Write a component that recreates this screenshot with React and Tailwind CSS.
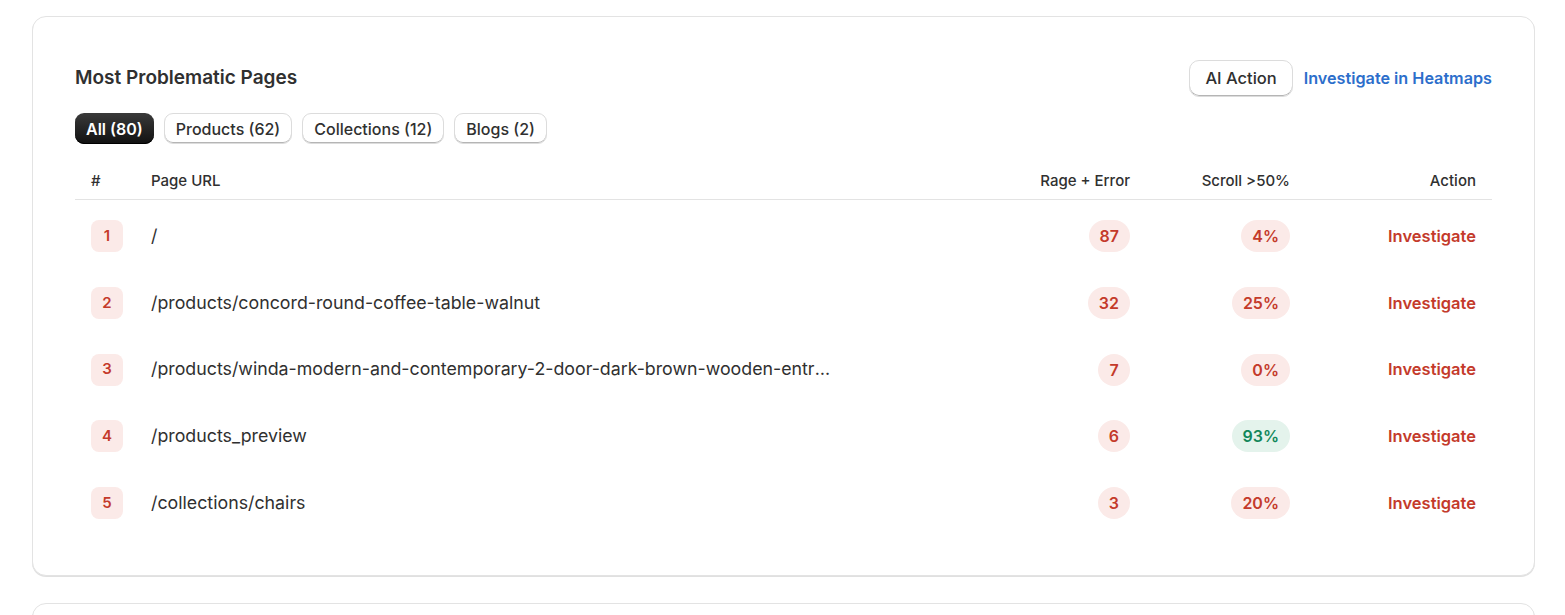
import React from "react";

const tabs = [
  { label: "All (80)", active: true },
  { label: "Products (62)" },
  { label: "Collections (12)" },
  { label: "Blogs (2)" },
];

const pages = [
  { id: 1, url: "/", rage: 87, scroll: 4 },
  { id: 2, url: "/products/concord-round-coffee-table-walnut", rage: 32, scroll: 25 },
  {
    id: 3,
    url: "/products/winda-modern-and-contemporary-2-door-dark-brown-wooden-entryway-cabinet",
    rage: 7,
    scroll: 0,
  },
  { id: 4, url: "/products_preview", rage: 6, scroll: 93 },
  { id: 5, url: "/collections/chairs", rage: 3, scroll: 20 },
];

const cols = "grid grid-cols-[60px_1fr_160px_160px_186px]";

const Pill = ({ children, good }) => (
  <span
    className={`inline-flex h-8 min-w-8 items-center justify-center rounded-full px-[11px] text-[16px] font-semibold ${
      good ? "bg-[#e4f3ec] text-[#12875b]" : "bg-[#fbeae8] text-[#c43a2b]"
    }`}
  >
    {children}
  </span>
);

const App = () => {
  return (
    <div className="h-[615px] overflow-hidden bg-white pl-[32px] pr-[30px] pt-4 font-['Inter',sans-serif] text-[#303030]">
      {/* Problematic pages card */}
      <div className="rounded-[14px] border border-[#e3e3e3] bg-white px-[42px] pb-[39px] pt-[42px] shadow-[0_1px_0_0_rgba(0,0,0,0.12)]">
        <div className="flex h-[38px] items-center justify-between">
          <h2 className="text-[19px] font-semibold">Most Problematic Pages</h2>
          <div className="flex items-center gap-[11px]">
            <button className="h-[37px] rounded-[10px] border border-[#dcdcdc] bg-white px-[15px] text-[16.5px] font-medium shadow-[inset_0_-1px_0_#b5b5b5]">
              AI Action
            </button>
            <a className="text-[16.2px] font-semibold text-[#2c6ecb]">Investigate in Heatmaps</a>
          </div>
        </div>

        {/* Filter tabs */}
        <div className="mt-[16px] flex gap-[10px]">
          {tabs.map((t) =>
            t.active ? (
              <button
                key={t.label}
                className="h-[31px] rounded-[9px] bg-gradient-to-b from-[#3a3a3a] to-[#121212] px-[11px] text-[16px] font-semibold text-white shadow-[inset_0_-1px_0_#000]"
              >
                {t.label}
              </button>
            ) : (
              <button
                key={t.label}
                className="h-[31px] rounded-[9px] border border-[#dcdcdc] bg-white px-[11px] text-[16px] font-medium shadow-[inset_0_-1px_0_#b5b5b5]"
              >
                {t.label}
              </button>
            )
          )}
        </div>

        {/* Table */}
        <div className="mt-4">
          <div className={`${cols} h-[40px] items-center border-b border-[#e3e3e3] pt-[3px] text-[15px] font-medium`}>
            <div className="px-4">#</div>
            <div className="px-4">Page URL</div>
            <div className="px-4 text-right">Rage + Error</div>
            <div className="px-4 text-right">Scroll &gt;50%</div>
            <div className="px-4 text-right">Action</div>
          </div>
          <div className="pt-[3px]">
            {pages.map((p) => (
              <div key={p.id} className={`${cols} h-[66.7px] items-center`}>
                <div className="px-4">
                  <span className="flex h-8 w-8 items-center justify-center rounded-[8px] bg-[#fbeae8] text-[15px] font-semibold text-[#c43a2b]">
                    {p.id}
                  </span>
                </div>
                <div className="min-w-0 px-4">
                  <div className="max-w-[681px] truncate text-[17.8px]">{p.url}</div>
                </div>
                <div className="px-4 text-right">
                  <Pill>{p.rage}</Pill>
                </div>
                <div className="px-4 text-right">
                  <Pill good={p.scroll > 50}>{p.scroll}%</Pill>
                </div>
                <div className="px-4 text-right">
                  <a className="text-[16.5px] font-semibold text-[#c43a2b]">Investigate</a>
                </div>
              </div>
            ))}
          </div>
        </div>
      </div>

      {/* Next card, cut off by the window */}
      <div className="mt-[27px] h-[120px] rounded-[14px] border border-[#e3e3e3] bg-white shadow-[0_1px_0_0_rgba(0,0,0,0.12)]" />
    </div>
  );
};

export default App;
